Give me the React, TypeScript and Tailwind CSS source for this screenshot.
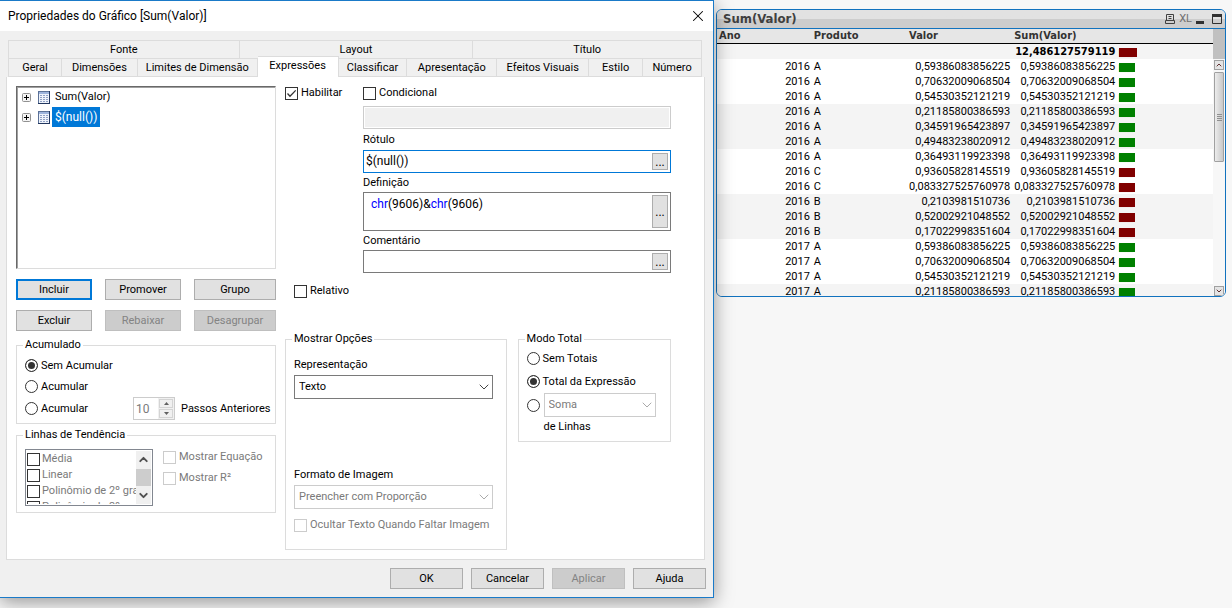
import React, { useState } from 'react';
import { ChevronDown, ChevronUp, X } from 'lucide-react';

interface Row {
  ano: string;
  produto: string;
  valor: string;
  alta: boolean;
}

const rows: Row[] = [
  { ano: '2016', produto: 'A', valor: '0,59386083856225', alta: true },
  { ano: '2016', produto: 'A', valor: '0,70632009068504', alta: true },
  { ano: '2016', produto: 'A', valor: '0,54530352121219', alta: true },
  { ano: '2016', produto: 'A', valor: '0,21185800386593', alta: true },
  { ano: '2016', produto: 'A', valor: '0,34591965423897', alta: true },
  { ano: '2016', produto: 'A', valor: '0,49483238020912', alta: true },
  { ano: '2016', produto: 'A', valor: '0,36493119923398', alta: true },
  { ano: '2016', produto: 'C', valor: '0,93605828145519', alta: false },
  { ano: '2016', produto: 'C', valor: '0,083327525760978', alta: false },
  { ano: '2016', produto: 'B', valor: '0,2103981510736', alta: false },
  { ano: '2016', produto: 'B', valor: '0,52002921048552', alta: false },
  { ano: '2016', produto: 'B', valor: '0,17022998351604', alta: false },
  { ano: '2017', produto: 'A', valor: '0,59386083856225', alta: true },
  { ano: '2017', produto: 'A', valor: '0,70632009068504', alta: true },
  { ano: '2017', produto: 'A', valor: '0,54530352121219', alta: true },
  { ano: '2017', produto: 'A', valor: '0,21185800386593', alta: true },
];

const topTabs = ['Fonte', 'Layout', 'Título'];
const tabs = [
  'Geral',
  'Dimensões',
  'Limites de Dimensão',
  'Expressões',
  'Classificar',
  'Apresentação',
  'Efeitos Visuais',
  'Estilo',
  'Número',
];

const Button: React.FC<{ children: React.ReactNode; disabled?: boolean; primary?: boolean; className?: string }> = ({
  children,
  disabled,
  primary,
  className = '',
}) => (
  <button
    type="button"
    disabled={disabled}
    className={`h-[21px] flex items-center justify-center ${
      disabled
        ? 'border border-[#bfbfbf] bg-[#cccccc] text-[#838383]'
        : primary
          ? 'border-2 border-[#0078d7] bg-[#e1e1e1]'
          : 'border border-[#adadad] bg-[#e1e1e1]'
    } ${className}`}
  >
    {children}
  </button>
);

const Check: React.FC<{ label: string; defaultChecked?: boolean; disabled?: boolean; dim?: boolean }> = ({
  label,
  defaultChecked,
  disabled,
  dim,
}) => (
  <label
    className={`flex items-center whitespace-nowrap ${dim ? 'gap-[2px]' : 'gap-[3px]'} ${
      disabled || dim ? 'text-[#7a7a7a]' : ''
    }`}
  >
    <span className="relative block size-[13px] shrink-0">
      <input
        type="checkbox"
        defaultChecked={defaultChecked}
        disabled={disabled}
        className="peer block size-[13px] appearance-none border border-[#333333] bg-white disabled:border-[#cccccc]"
      />
      <svg viewBox="0 0 13 13" className="pointer-events-none absolute inset-0 hidden size-[13px] peer-checked:block">
        <path d="M2.5 6.5 5 9.2 10.7 3.4" fill="none" stroke="#333" strokeWidth="1.3" />
      </svg>
    </span>
    {label}
  </label>
);

const Radio: React.FC<{ name: string; label?: string; ariaLabel?: string; defaultChecked?: boolean }> = ({
  name,
  label,
  ariaLabel,
  defaultChecked,
}) => (
  <label className="flex items-center gap-[3px] whitespace-nowrap">
    <input
      type="radio"
      name={name}
      aria-label={ariaLabel}
      defaultChecked={defaultChecked}
      className="size-[13px] shrink-0 appearance-none rounded-full border border-[#333333] bg-white checked:bg-[#333333] checked:shadow-[inset_0_0_0_2px_white]"
    />
    {label}
  </label>
);

const Select: React.FC<{ id?: string; value: string; disabled?: boolean; ariaLabel?: string }> = ({
  id,
  value,
  disabled,
  ariaLabel,
}) => (
  <div className="relative w-full">
    <select
      id={id}
      aria-label={ariaLabel}
      disabled={disabled}
      className="block h-6 w-full appearance-none border border-[#7a7a7a] bg-white pl-1 pr-5 opacity-100 disabled:border-[#cccccc] disabled:text-[#7a7a7a]"
    >
      <option>{value}</option>
    </select>
    <ChevronDown
      className={`pointer-events-none absolute right-[1px] top-1 size-4 ${disabled ? 'text-[#aaaaaa]' : 'text-[#444444]'}`}
      strokeWidth={1.5}
    />
  </div>
);

const Group: React.FC<{ title: string; className?: string; children: React.ReactNode }> = ({
  title,
  className = '',
  children,
}) => (
  <fieldset className={`min-w-0 border border-[#dcdcdc] px-[6px] ${className}`}>
    <legend className="h-4 px-[2px] leading-4">{title}</legend>
    <div className="px-[2px]">{children}</div>
  </fieldset>
);

const MoreButton: React.FC<{ label: string }> = ({ label }) => (
  <button
    type="button"
    aria-label={label}
    className="m-[2px] flex w-4 shrink-0 items-center justify-center border border-[#adadad] bg-[#e1e1e1] text-[12px]"
  >
    ...
  </button>
);

const TreeItem: React.FC<{ label: string; selected: boolean; onSelect: () => void }> = ({
  label,
  selected,
  onSelect,
}) => (
  <li className="flex h-5 items-center">
    <svg viewBox="0 0 9 9" className="size-[9px]">
      <rect x="0.5" y="0.5" width="8" height="8" rx="1" fill="#f4f4f4" stroke="#919191" />
      <path d="M2 4.5h5M4.5 2v5" stroke="#000" />
    </svg>
    <svg viewBox="0 0 12 13" className="ml-[7px] h-[13px] w-3">
      <rect x="0.5" y="0.5" width="11" height="12" fill="#eef3fb" stroke="#5b7197" />
      <path d="M11.5 0v13M0 12.5h12" stroke="#22375f" />
      <path d="M1 2h10" stroke="#9db4dc" strokeWidth="2" />
      <path d="M2 4.5h8M2 6.5h8M2 8.5h8M2 10.5h8" stroke="#8fa0c4" strokeDasharray="2 1" />
    </svg>
    <button
      type="button"
      onClick={onSelect}
      className={`ml-[2px] h-5 px-[3px] ${selected ? 'bg-[#0078d7] text-[12px] text-white' : ''}`}
    >
      {label}
    </button>
  </li>
);

const ExpressionsPanel: React.FC = () => {
  const [selected, setSelected] = useState('$(null())');
  const [definition, setDefinition] = useState('chr(9606)&chr(9606)');

  return (
    <div className="grid grid-cols-[minmax(0,260fr)_minmax(0,386fr)] gap-x-[9px] border border-t-0 border-[#dcdcdc] bg-white pb-[9px] pl-[9px] pr-[33px] pt-[9px]">
      <div>
        <ul className="h-[183px] border border-[#dcdcdc] border-l-[#696969] border-t-[#696969] pl-[5px] shadow-[inset_1px_1px_0_#a0a0a0]">
          {['Sum(Valor)', '$(null())'].map((item) => (
            <TreeItem key={item} label={item} selected={selected === item} onSelect={() => setSelected(item)} />
          ))}
        </ul>

        <div className="mt-[10px] grid grid-cols-[76fr_76fr_82fr] gap-x-[13px] gap-y-[10px]">
          <Button primary>Incluir</Button>
          <Button>Promover</Button>
          <Button>Grupo</Button>
          <Button>Excluir</Button>
          <Button disabled>Rebaixar</Button>
          <Button disabled>Desagrupar</Button>
        </div>

        <Group title="Acumulado" className="mt-[6px] pb-[3px] pt-[2px]">
          <div className="flex h-[21px] items-center">
            <Radio name="acumulado" label="Sem Acumular" defaultChecked />
          </div>
          <div className="flex h-[21px] items-center">
            <Radio name="acumulado" label="Acumular" />
          </div>
          <div className="flex h-[23px] items-center">
            <div className="w-[108px] shrink-0">
              <Radio name="acumulado" label="Acumular" />
            </div>
            <div className="flex h-[23px] w-[42px] shrink-0 border border-[#cccccc]">
              <input
                id="passos"
                defaultValue="10"
                disabled
                className="w-6 bg-white pl-[2px] text-[12px] text-[#7a7a7a]"
              />
              <div className="grid flex-1 grid-rows-2 gap-[1px] bg-[#f0f0f0] p-[1px]">
                <button type="button" disabled aria-label="Aumentar" className="flex items-center justify-center border border-[#d4d4d4]">
                  <svg viewBox="0 0 5 3" className="h-[3px] w-[5px]">
                    <path d="M0 3 2.5 0 5 3z" fill="#606060" />
                  </svg>
                </button>
                <button type="button" disabled aria-label="Diminuir" className="flex items-center justify-center border border-[#d4d4d4]">
                  <svg viewBox="0 0 5 3" className="h-[3px] w-[5px]">
                    <path d="M0 0 2.5 3 5 0z" fill="#606060" />
                  </svg>
                </button>
              </div>
            </div>
            <label htmlFor="passos" className="ml-[6px] whitespace-nowrap">
              Passos Anteriores
            </label>
          </div>
        </Group>

        <Group title="Linhas de Tendência" className="mt-[3px] pb-[6px]">
          <div className="flex gap-[10px] pt-[6px]">
            <div className="flex h-[57px] w-[128px] shrink-0 border border-[#828790] p-[1px]">
              <div className="min-w-0 flex-1 overflow-hidden">
                {['Média', 'Linear', 'Polinômio de 2º gra', 'Polinômio de 3º gra'].map((name) => (
                  <div key={name} className="flex h-4 items-center">
                    <Check label={name} dim />
                  </div>
                ))}
              </div>
              <div className="flex w-[15px] shrink-0 flex-col items-center justify-between bg-[#f0f0f0] py-[2px]">
                <ChevronUp className="size-[13px] text-[#505050]" strokeWidth={3.5} />
                <div className="h-[17px] w-full bg-[#cdcdcd]" />
                <ChevronDown className="size-[13px] text-[#505050]" strokeWidth={3.5} />
              </div>
            </div>
            <div>
              <div className="flex h-[21px] items-start">
                <Check label="Mostrar Equação" disabled />
              </div>
              <div className="flex h-[21px] items-start">
                <Check label="Mostrar R²" disabled />
              </div>
            </div>
          </div>
        </Group>
      </div>

      <div>
        <div className="grid grid-cols-[minmax(0,78fr)_minmax(0,308fr)]">
          <div className="flex h-[14px] items-center">
            <Check label="Habilitar" defaultChecked />
          </div>
          <div>
            <div className="flex h-[14px] items-center">
              <Check label="Condicional" />
            </div>
            <input
              aria-label="Condição"
              disabled
              className="mt-[6px] block h-[23px] w-full border border-[#cccccc] bg-[#f0f0f0] shadow-[inset_0_0_0_1px_white]"
            />
            <label htmlFor="rotulo" className="flex h-[21px] items-center">
              Rótulo
            </label>
            <div className="flex h-[23px] border border-[#0078d7]">
              <input
                id="rotulo"
                defaultValue="$(null())"
                className="min-w-0 flex-1 pb-[2px] pl-[2px] text-[12px] outline-none"
              />
              <MoreButton label="Editar rótulo" />
            </div>
            <label htmlFor="definicao" className="flex h-[19px] items-center">
              Definição
            </label>
            <div className="flex h-[39px] border border-[#7a7a7a] text-[12px]">
              <div className="relative min-w-0 flex-1">
                {/* highlighted copy sits under the transparent editor */}
                <div aria-hidden="true" className="whitespace-pre py-[3px] pl-[7px] leading-4">
                  {definition.split(/(chr)/).map((part, i) => (
                    <span key={i} className={part === 'chr' ? 'text-[#0000ff]' : ''}>
                      {part}
                    </span>
                  ))}
                </div>
                <textarea
                  id="definicao"
                  value={definition}
                  onChange={(e) => setDefinition(e.target.value)}
                  className="absolute inset-0 size-full resize-none bg-transparent py-[3px] pl-[7px] leading-4 text-transparent caret-black outline-none"
                />
              </div>
              <MoreButton label="Editar definição" />
            </div>
            <label htmlFor="comentario" className="flex h-[19px] items-center">
              Comentário
            </label>
            <div className="flex h-[23px] border border-[#7a7a7a]">
              <input id="comentario" className="min-w-0 flex-1 pl-[2px] outline-none" />
              <MoreButton label="Editar comentário" />
            </div>
          </div>
        </div>

        <div className="mt-[11px] flex h-[14px] items-center pl-[9px]">
          <Check label="Relativo" />
        </div>

        <div className="mt-[33px] grid grid-cols-[minmax(0,221fr)_minmax(0,153fr)] items-start gap-x-[11px]">
          <Group title="Mostrar Opções" className="pb-[14px]">
            <div className="pr-[5px] pt-2">
              <label htmlFor="representacao" className="flex h-5 items-center">
                Representação
              </label>
              <Select id="representacao" value="Texto" />
              <label htmlFor="formato" className="mt-[66px] flex h-5 items-center">
                Formato de Imagem
              </label>
              <Select id="formato" value="Preencher com Proporção" disabled />
              <div className="mt-[6px] flex h-5 items-center">
                <Check label="Ocultar Texto Quando Faltar Imagem" disabled />
              </div>
            </div>
          </Group>

          <Group title="Modo Total" className="pb-1">
            <div className="flex h-[23px] items-center">
              <Radio name="total" label="Sem Totais" />
            </div>
            <div className="flex h-[23px] items-center">
              <Radio name="total" label="Total da Expressão" defaultChecked />
            </div>
            <div className="flex h-6 items-center gap-1 pr-[6px]">
              <Radio name="total" ariaLabel="Função de linhas" />
              <Select value="Soma" ariaLabel="Função" disabled />
            </div>
            <div className="flex h-5 items-center pl-[17px]">de Linhas</div>
          </Group>
        </div>
      </div>
    </div>
  );
};

const PropertiesDialog: React.FC = () => (
  <section className="relative z-10 min-w-0 border-b border-r border-t border-[#1a7ac8] bg-[#f0f0f0] shadow-[0_4px_18px_rgba(0,0,0,0.4)]">
    <header className="flex h-[30px] items-center justify-between bg-white pl-2 pr-[6px]">
      <h1 className="text-[12px]">Propriedades do Gráfico [Sum(Valor)]</h1>
      <button type="button" aria-label="Fechar">
        <X className="size-[18px]" strokeWidth={1.4} />
      </button>
    </header>

    <div className="pl-[6px] pr-2 pt-[9px]">
      <nav className="pl-[2px] pr-[3px]">
        <div className="grid grid-cols-[231fr_234fr_229fr] border-l border-[#dcdcdc]">
          {topTabs.map((tab) => (
            <button key={tab} type="button" className="h-[18px] border-r border-t border-[#dcdcdc]">
              {tab}
            </button>
          ))}
        </div>
        <div className="grid h-[19px] grid-cols-[53fr_76fr_120fr_81fr_69fr_90fr_92fr_54fr_59fr] border-l border-[#dcdcdc]">
          {tabs.map((tab) =>
            tab === 'Expressões' ? (
              <button
                key={tab}
                type="button"
                className="relative -mt-[2px] h-[21px] whitespace-nowrap border-r border-t border-[#dcdcdc] bg-white pb-[2px]"
              >
                {tab}
              </button>
            ) : (
              <button
                key={tab}
                type="button"
                className="h-[19px] whitespace-nowrap border-b border-r border-t border-[#dcdcdc]"
              >
                {tab}
              </button>
            ),
          )}
        </div>
      </nav>
      <ExpressionsPanel />
    </div>

    <footer className="flex justify-end gap-2 pb-2 pr-[7px] pt-2">
      <Button className="w-[73px]">OK</Button>
      <Button className="w-[73px]">Cancelar</Button>
      <Button className="w-[73px]" disabled>
        Aplicar
      </Button>
      <Button className="w-[73px]">Ajuda</Button>
    </footer>
  </section>
);

const ChartTable: React.FC = () => (
  <section className="mt-[9px] max-h-[288px] min-w-0 overflow-hidden rounded-md border border-[#1172be] bg-white">
    <header className="flex h-[19px] items-center justify-between border-b border-[#1172be] bg-linear-to-b from-[#e2e2e2] from-50% to-[#cdcdcd] to-50% pl-[6px] pr-[3px] text-[#404040]">
      <h2 className="font-['DejaVu_Sans_Condensed','DejaVu_Sans',sans-serif] text-[13px] leading-4 font-bold">Sum(Valor)</h2>
      <div className="flex items-center gap-1">
        <button type="button" aria-label="Imprimir">
          <svg viewBox="0 0 10 10" className="size-[10px]" fill="none" stroke="#404040">
            <path d="M1.5 6V0.5h7V6M3.5 2.5h3M3.5 4.5h3M0.5 6.5h9v3h-9z" />
          </svg>
        </button>
        <button type="button" className="text-[11px] text-[#707070]">
          XL
        </button>
        <button type="button" aria-label="Minimizar">
          <svg viewBox="0 0 8 10" className="h-[10px] w-2">
            <path d="M0 7h8v3H0z" fill="#303030" />
          </svg>
        </button>
        <button type="button" aria-label="Maximizar" className="ml-1">
          <svg viewBox="0 0 10 10" className="size-[10px]">
            <path d="M0.5 0.5h9v9h-9z" fill="none" stroke="#303030" />
            <path d="M0 0h10v3H0z" fill="#303030" />
          </svg>
        </button>
      </div>
    </header>

    <div className="flex">
      <table className="min-w-0 flex-1 table-fixed border-collapse">
        <colgroup>
          <col className="w-[19.4%]" />
          <col className="w-[19.4%]" />
          <col className="w-[20.8%]" />
          <col className="w-[20.8%]" />
          <col className="w-[19.6%]" />
        </colgroup>
        <thead>
          <tr className="h-[14px] border-b border-black bg-[#e6e6e6] text-left font-['DejaVu_Sans_Condensed','DejaVu_Sans',sans-serif] leading-[14px] text-[#333333]">
            <th className="px-[2px]">Ano</th>
            <th className="px-[2px]">Produto</th>
            <th className="px-[2px]">Valor</th>
            <th className="px-[2px]">Sum(Valor)</th>
            <th />
          </tr>
        </thead>
        <tbody>
          <tr className="h-[15px] bg-[#f4f4f4] leading-[15px]">
            <td colSpan={3} />
            <td className="px-[2px] text-right font-['DejaVu_Sans_Condensed','DejaVu_Sans',sans-serif] font-bold">
              12,486127579119
            </td>
            <td className="px-[2px] pt-1 align-top">
              <span className="block h-[9px] w-[18px] bg-[#800000] font-['DejaVu_Sans'] text-[9px] leading-[9px] text-[#800000]">
                ▆▆
              </span>
            </td>
          </tr>
          {rows.map((row, i) => (
            <tr key={i} className={`h-[15px] leading-[15px] ${Math.floor(i / 3) % 2 === 1 ? 'bg-[#f4f4f4]' : 'bg-white'}`}>
              <td className="px-[2px] text-right">{row.ano}</td>
              <td className="px-[2px]">{row.produto}</td>
              <td className="px-[2px] text-right">{row.valor}</td>
              <td className="px-[2px] text-right">{row.valor}</td>
              <td className="px-[2px] pt-1 align-top">
                <span
                  className={`block h-[9px] w-4 font-['DejaVu_Sans'] text-[9px] leading-[9px] ${
                    row.alta ? 'bg-[#008000] text-[#008000]' : 'bg-[#800000] text-[#800000]'
                  }`}
                >
                  ▆▆
                </span>
              </td>
            </tr>
          ))}
        </tbody>
      </table>

      <div className="flex h-[268px] w-3 shrink-0 flex-col bg-[#f7f7f7]">
        <div className="h-[30px] bg-[#c0c0c0]" />
        <button type="button" aria-label="Rolar para cima" className="m-[1px] flex h-[10px] items-center justify-center border border-[#a0a0a0] bg-[#e4e4e4]">
          <ChevronUp className="size-2 text-[#603030]" strokeWidth={3} />
        </button>
        <div className="m-[1px] flex h-[90px] flex-col items-center justify-center gap-[1px] rounded-[1px] border border-[#a0a0a0] bg-linear-to-r from-[#ececec] to-[#c8c8c8]">
          <span className="h-px w-[5px] bg-[#909090]" />
          <span className="h-px w-[5px] bg-[#909090]" />
          <span className="h-px w-[5px] bg-[#909090]" />
          <span className="h-px w-[5px] bg-[#909090]" />
        </div>
        <button type="button" aria-label="Rolar para baixo" className="m-[1px] mt-auto flex h-[10px] items-center justify-center border border-[#a0a0a0] bg-[#e4e4e4]">
          <ChevronDown className="size-2 text-[#603030]" strokeWidth={3} />
        </button>
      </div>
    </div>
  </section>
);

const App: React.FC = () => (
  <main className="grid min-h-screen grid-cols-[minmax(0,714fr)_minmax(0,510fr)] items-start gap-x-[2px] overflow-hidden bg-[#f7f7f7] pr-[6px] font-[Roboto,sans-serif] text-[11px] leading-4 text-black">
    <PropertiesDialog />
    <ChartTable />
  </main>
);

export default App;
